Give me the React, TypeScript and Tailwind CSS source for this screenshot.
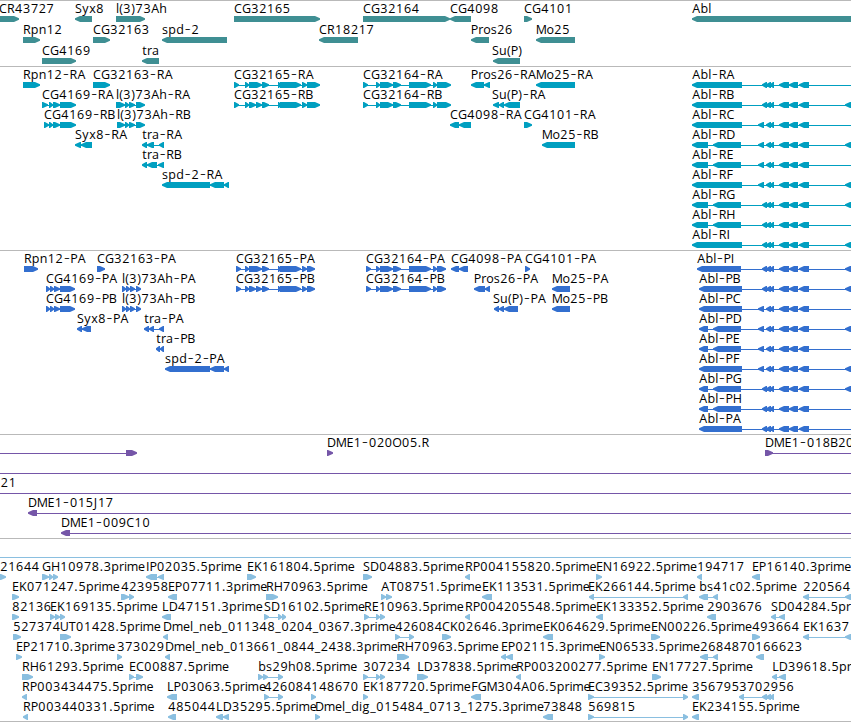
import React from 'react';

type Dir = 'L' | 'R';
// label, label x, direction, exon blocks, optional line extent
type Feature = { t: string; x: number; d: Dir; e: number[][]; line?: [number, number] };

const f = (t: string, d: Dir, e: number[][], x?: number, line?: [number, number]): Feature => ({
  t,
  d,
  e,
  x: x ?? e[0][0],
  line,
});

const ADV: Record<string, number> = {
  '.': 4, '-': 7.3, _: 6, '(': 4, ')': 4.3, l: 3, i: 3, t: 5, r: 5, m: 11, p: 7.8, e: 7, a: 7, b: 8, c: 6.5,
  d: 8, g: 8, h: 7.8, n: 7.8, o: 7.5, s: 6.2, u: 7.8, x: 7, y: 7, A: 8.3, B: 7.6, C: 8, D: 9, E: 7, F: 6.8,
  G: 9, H: 9, I: 3.6, J: 4.3, K: 7.8, L: 6.7, M: 10.5, N: 9, O: 9.5, P: 7.2, R: 7.8, S: 7, T: 7.2, U: 8.6,
};

// Each glyph is centred in its own advance slot; hyphens are drawn wider.
function Label({ text, x, y }: { text: string; x: number; y: number }) {
  let cur = x;
  const parts = text.split(/(-)/).filter(Boolean);
  return (
    <text textAnchor="middle" fill="#000">
      {parts.map((part, i) => {
        const xs = [...part]
          .map((c) => {
            const w = ADV[c] ?? 7.87;
            const at = cur + w / 2;
            cur += w;
            return at.toFixed(1);
          })
          .join(' ');
        return part === '-' ? (
          <tspan key={i} x={xs} y={y + 1} className="text-[18px] font-light">
            {part}
          </tspan>
        ) : (
          <tspan key={i} x={xs} y={y}>
            {part}
          </tspan>
        );
      })}
    </text>
  );
}

function block(a: number, b: number, y: number, d: Dir) {
  const h = Math.min(5, b - a - 1);
  return d === 'R'
    ? `M${a} ${y}H${b - h}L${b} ${y + 2.3}V${y + 3.7}L${b - h} ${y + 6}H${a}Z`
    : `M${b} ${y}H${a + h}L${a} ${y + 2.3}V${y + 3.7}L${a + h} ${y + 6}H${b}Z`;
}

type TrackProps = { rows: Feature[][]; color: string; height: number; top: number; pitch?: number };

function Track({ rows, color, height, top, pitch = 20 }: TrackProps) {
  return (
    <svg width="851" height={height} className="block overflow-hidden">
      {rows.map((row, r) =>
        row.map((ft, i) => {
          const y = top + r * pitch;
          const [l0, l1] = ft.line ?? (ft.e.length ? [ft.e[0][0] + 1, ft.e[ft.e.length - 1][1] - 1] : [0, 0]);
          return (
            <g key={`${r}-${i}`}>
              {(ft.e.length > 1 || ft.line) && <rect x={l0} y={y + 3} width={l1 - l0} height="1" fill={color} />}
              <path d={ft.e.map(([a, b]) => block(a, b, y, ft.d)).join('')} fill={color} />
              {ft.t && <Label text={ft.t} x={ft.x} y={y - 3} />}
            </g>
          );
        }),
      )}
    </svg>
  );
}

const genes: Feature[][] = [
  [
    f('CR43727', 'R', [[-5, 19]], -1),
    f('Syx8', 'L', [[75, 92]]),
    f('l(3)73Ah', 'R', [[116, 145]]),
    f('CG32165', 'R', [[234, 320]]),
    f('CG32164', 'R', [[363, 450]]),
    f('CG4098', 'L', [[450, 471]]),
    f('CG4101', 'R', [[524, 532]]),
    f('Abl', 'L', [[692, 860]]),
  ],
  [
    f('Rpn12', 'R', [[23, 40]]),
    f('CG32163', 'R', [[93, 110]]),
    f('spd-2', 'L', [[162, 227]]),
    f('CR18217', 'L', [[319, 358]]),
    f('Pros26', 'L', [[471, 489]]),
    f('Mo25', 'L', [[536, 575]]),
  ],
  [f('CG4169', 'R', [[42, 76]]), f('tra', 'L', [[142, 159]]), f('Su(P)', 'L', [[493, 520]], 492)],
];

const tight = [[762, 767], [766, 771], [770, 774]];
const wide = [[758, 764], [766, 771], [770, 774]];
const tail = [[779, 789], [789, 798], [799, 809]];
const far = [[845, 851]];

function abl(t: string, start: number, split: boolean, isWide: boolean, hasFar: boolean, end = 742) {
  const head = split ? [[start, 708], [713, 741]] : [[start, end]];
  return f(t, 'L', [...head, ...(isWide ? wide : tight), ...tail, ...(hasFar ? far : [])], start, [start + 2, 851]);
}

const mid165 = [[278, 281], [280, 301], [302, 307]];
const mid164 = [[376, 380], [380, 393], [393, 401], [409, 431], [433, 437]];
const a165 = [[245, 249], [249, 262], [262, 269]];
const b165 = [[245, 249], [249, 256], [256, 262], [262, 269]];

const transcripts: Feature[][] = [
  [
    f('Rpn12-RA', 'R', [[23, 40]]),
    f('CG32163-RA', 'R', [[93, 110]]),
    f('CG32165-RA', 'R', [[234, 239], ...a165, ...mid165, [307, 320]]),
    f('CG32164-RA', 'R', [[363, 368], ...mid164, [437, 451]]),
    f('Pros26-RA', 'L', [[471, 484], [484, 490]]),
    f('Mo25-RA', 'L', [[536, 575]]),
    abl('Abl-RA', 692, false, false, false),
  ],
  [
    f('CG4169-RA', 'R', [[42, 48], [49, 53], [53, 60], [60, 76]]),
    f('l(3)73Ah-RA', 'R', [[116, 125], [125, 129], [129, 135], [136, 145]]),
    f('CG32165-RB', 'R', [[234, 239], ...b165, ...mid165, [307, 320]]),
    f('CG32164-RB', 'R', [[363, 368], ...mid164, [437, 451]]),
    f('Su(P)-RA', 'L', [[493, 499], [499, 504], [504, 520]], 492),
    abl('Abl-RB', 692, false, false, true),
  ],
  [
    f('CG4169-RB', 'R', [[44, 49], [49, 53], [53, 60], [60, 76]]),
    f('l(3)73Ah-RB', 'R', [[117, 125], [125, 129], [129, 135], [136, 145]]),
    f('CG4098-RA', 'L', [[450, 459], [459, 471]]),
    f('CG4101-RA', 'R', [[524, 532]]),
    abl('Abl-RC', 692, false, true, false),
  ],
  [
    f('Syx8-RA', 'L', [[75, 81], [81, 92]]),
    f('tra-RA', 'L', [[142, 147], [147, 154], [159, 164]]),
    f('Mo25-RB', 'L', [[542, 575]]),
    abl('Abl-RD', 692, true, true, true),
  ],
  [f('tra-RB', 'L', [[142, 147], [147, 157], [158, 164]]), abl('Abl-RE', 692, true, true, false)],
  [f('spd-2-RA', 'L', [[162, 210], [210, 224], [224, 229]]), abl('Abl-RF', 692, false, true, true)],
  [abl('Abl-RG', 692, true, false, true)],
  [abl('Abl-RH', 692, true, false, false)],
  [abl('Abl-RI', 692, false, false, true)],
];

const cg4169p = [[46, 50], [50, 54], [54, 60], [60, 75]];
const l373p = [[122, 126], [126, 130], [130, 135], [136, 141]];

const proteins: Feature[][] = [
  [
    f('Rpn12-PA', 'R', [[24, 38]]),
    f('CG32163-PA', 'R', [[97, 105]]),
    f('CG32165-PA', 'R', [[236, 241], ...a165, ...mid165, [307, 315]]),
    f('CG32164-PA', 'R', [[366, 371], ...mid164, [437, 446]]),
    f('CG4098-PA', 'L', [[451, 459], [459, 468]]),
    f('CG4101-PA', 'R', [[525, 530]]),
    abl('Abl-PI', 697, false, false, true, 741),
  ],
  [
    f('CG4169-PA', 'R', cg4169p),
    f('l(3)73Ah-PA', 'R', l373p),
    f('CG32165-PB', 'R', [[236, 241], ...b165, ...mid165, [307, 315]]),
    f('CG32164-PB', 'R', [[366, 371], ...mid164, [437, 446]]),
    f('Pros26-PA', 'L', [[474, 485], [485, 490]]),
    f('Mo25-PA', 'L', [[552, 570]]),
    abl('Abl-PB', 699, false, false, true),
  ],
  [
    f('CG4169-PB', 'R', cg4169p),
    f('l(3)73Ah-PB', 'R', l373p),
    f('Su(P)-PA', 'L', [[494, 499], [499, 504], [504, 518]], 493),
    f('Mo25-PB', 'L', [[552, 570]]),
    abl('Abl-PC', 699, false, true, false),
  ],
  [
    f('Syx8-PA', 'L', [[77, 82], [82, 91]]),
    f('tra-PA', 'L', [[144, 149], [149, 154], [159, 164]]),
    abl('Abl-PD', 699, true, true, true),
  ],
  [f('tra-PB', 'L', [[156, 160], [160, 164]]), abl('Abl-PE', 699, true, true, false)],
  [f('spd-2-PA', 'L', [[165, 210], [210, 224], [224, 229]]), abl('Abl-PF', 699, false, true, true)],
  [abl('Abl-PG', 699, true, false, true)],
  [abl('Abl-PH', 699, true, false, false)],
  [abl('Abl-PA', 699, false, false, false)],
];

const bacs: Feature[][] = [
  [
    f('', 'R', [[126, 137]], 0, [0, 130]),
    f('DME1-020O05.R', 'R', [[327, 333]]),
    f('DME1-018B20', 'R', [[765, 773]], 765, [766, 851]),
  ],
  [f('', 'L', [], 0, [0, 851])],
  [f('21', 'L', [], 0.5, [0, 851])],
  [f('DME1-015J17', 'L', [[28, 37]], 28, [30, 851])],
  [f('DME1-009C10', 'L', [[61, 70]], 61, [63, 851])],
];

const ests: Feature[][] = [
  [
    f('21644', 'R', [[-4, 6]], 0),
    f('GH10978.3prime', 'R', [[42, 49], [49, 53], [53, 58]]),
    f('IP02035.5prime', 'L', [[146, 157], [158, 164]]),
    f('EK161804.5prime', 'R', [[247, 256]]),
    f('SD04883.5prime', 'R', [[363, 372]]),
    f('RP004155820.5prime', 'L', [[465, 470]]),
    f('EN16922.5prime', 'R', [[596, 602]]),
    f('194717', 'L', [[697, 702]]),
    f('EP16140.3prime', 'L', [[752, 760]]),
  ],
  [
    f('EK071247.5prime', 'R', [[12, 19]]),
    f('423958', 'R', [[121, 129], [129, 134]]),
    f('EP07711.3prime', 'L', [[168, 177]]),
    f('RH70963.5prime', 'R', [[266, 278]]),
    f('AT08751.5prime', 'R', [[381, 386], [386, 392]]),
    f('EK113531.5prime', 'L', [[482, 492]]),
    f('EK266144.5prime', 'L', [[589, 594], [683, 688]], 588),
    f('bs41c02.5prime', 'L', [[699, 708], [713, 718]]),
    f('220564', 'L', [[803, 809], [845, 851]]),
  ],
  [
    f('82136', 'R', [[12, 19]]),
    f('EK169135.5prime', 'R', [[50, 55], [55, 60], [60, 65]]),
    f('LD47151.3prime', 'L', [[162, 171]]),
    f('SD16102.5prime', 'R', [[264, 269], [278, 282], [282, 286]]),
    f('RE10963.5prime', 'R', [[364, 369], [376, 380], [380, 385]]),
    f('RP004205548.5prime', 'L', [[465, 470]]),
    f('EK133352.5prime', 'L', [[596, 603]]),
    f('2903676', 'L', [[707, 716]]),
    f('SD04284.5prime', 'L', [[771, 776], [779, 785]]),
  ],
  [
    f('527374', 'R', [[13, 21]]),
    f('UT01428.5prime', 'R', [[60, 71]]),
    f('Dmel_neb_011348_0204_0367.3prime', 'L', [[163, 168]]),
    f('426084', 'R', [[395, 400], [409, 414]]),
    f('CK02646.3prime', 'R', [[442, 451]]),
    f('EK064629.5prime', 'L', [[543, 553]]),
    f('EN00226.5prime', 'R', [[651, 660]]),
    f('493664', 'R', [[752, 760]]),
    f('EK1637', 'L', [[803, 809], [845, 851]]),
  ],
  [
    f('EP21710.3prime', 'R', [[16, 22]]),
    f('373029', 'R', [[117, 122]]),
    f('Dmel_neb_013661_0844_2438.3prime', 'L', [[165, 170]]),
    f('RH70963.5prime', 'R', [[397, 409]]),
    f('EP02115.3prime', 'L', [[501, 506], [506, 513]]),
    f('EN06533.5prime', 'R', [[599, 605]]),
    f('2684870', 'L', [[700, 708], [713, 718]]),
    f('166623', 'L', [[756, 764]], 755),
  ],
  [
    f('RH61293.5prime', 'R', [[22, 33]]),
    f('EC00887.5prime', 'R', [[129, 134], [136, 143]]),
    f('bs29h08.5prime', 'R', [[258, 263], [263, 268], [278, 283]]),
    f('307234', 'R', [[363, 368], [376, 380], [380, 385]]),
    f('LD37838.5prime', 'R', [[417, 428]]),
    f('RP003200277.5prime', 'L', [[516, 521]]),
    f('EN17727.5prime', 'R', [[652, 661]]),
    f('LD39618.5prime', 'L', [[772, 777], [779, 786]]),
  ],
  [
    f('RP003434475.5prime', 'L', [[22, 27]]),
    f('LP03063.5prime', 'L', [[167, 177]]),
    f('426084', 'R', [[264, 269], [278, 283]]),
    f('148670', 'R', [[311, 316]]),
    f('EK187720.5prime', 'R', [[363, 368]]),
    f('FGM304A06.5prime', 'L', [[471, 481]]),
    f('EC39352.5prime', 'R', [[588, 594], [683, 688]]),
    f('356795', 'L', [[692, 699]]),
    f('3702956', 'L', [[739, 744], [762, 767], [766, 771], [770, 774]]),
  ],
  [
    f('RP003440331.5prime', 'L', [[23, 28]]),
    f('485044', 'L', [[168, 176]]),
    f('LD35295.5prime', 'L', [[216, 223], [223, 229]]),
    f('Dmel_dig_015484_0713_1275.3prime', 'R', [[315, 320]]),
    f('73848', 'L', [[543, 553]]),
    f('569815', 'R', [[588, 594], [683, 688]]),
    f('EK234155.5prime', 'L', [[692, 699]]),
  ],
];

export default function App() {
  return (
    <main className="flex h-[722px] w-[851px] flex-col overflow-hidden bg-white font-['Open_Sans',sans-serif] text-[12.5px]">
      <section className="border-t border-[#b9b9b9]">
        <Track rows={genes} color="#3f8f93" height={65} top={15} pitch={21} />
      </section>
      <section className="border-t border-[#b9b9b9]">
        <Track rows={transcripts} color="#009fc0" height={183} top={15} />
      </section>
      <section className="border-t border-[#b9b9b9]">
        <Track rows={proteins} color="#336fcf" height={183} top={15} />
      </section>
      <section className="border-t border-[#b9b9b9]">
        <Track rows={bacs} color="#7556a8" height={103} top={15} />
      </section>
      <section className="border-y border-[#b9b9b9] pt-[18px]">
        <div className="border-t border-[#8abfe0]">
          <Track rows={ests} color="#8abfe0" height={163} top={16} />
        </div>
      </section>
    </main>
  );
}
